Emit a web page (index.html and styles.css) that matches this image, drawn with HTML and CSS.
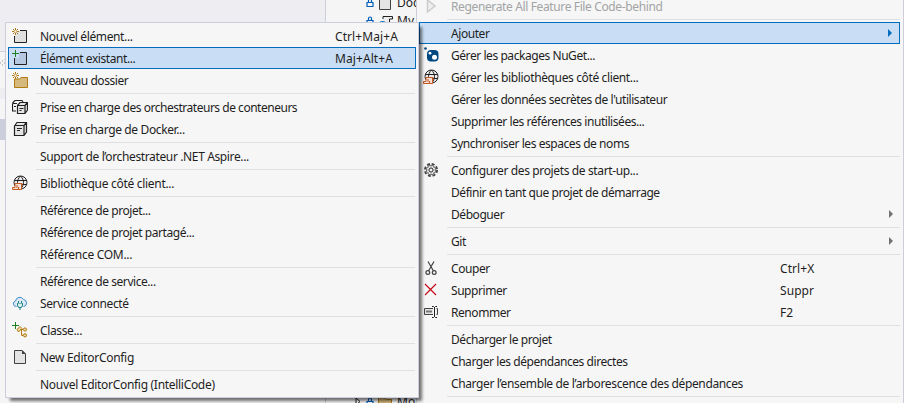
FILE: index.html
```
<!DOCTYPE html>
<html lang="fr">
<head>
<meta charset="utf-8">
<title>Menu contextuel</title>
<link rel="stylesheet" href="styles.css">
</head>
<body>
<svg width="0" height="0" class="defs">
  <symbol id="spark" viewBox="0 0 16 16"><path d="M3.5 0v2.4M3.5 4.6V7M0 3.5h2.4M4.6 3.5H7M1 1l1.6 1.6M4.4 4.4L6 6M6 1L4.4 2.6M2.6 4.4L1 6" stroke="#b27c13" fill="none"/></symbol>
  <symbol id="new" viewBox="0 0 16 16"><path d="M7 2.500H14.500V14.500H2.500V8" fill="#e0e0e0"/><path d="M8 2.500H14.500V14.500H2.500V8" stroke="#212121" fill="none"/><use href="#spark"/></symbol>
  <symbol id="existing" viewBox="0 0 16 16"><path d="M7 2.500H14.500V14.500H2.500V8H7z" fill="#b6c8e0"/><path d="M8 2.500H14.500V14.500H2.500V8" stroke="#212121" fill="none"/><path d="M3.500 0v7M0 3.500h7" stroke="#1f801f"/></symbol>
  <symbol id="folder" viewBox="0 0 16 16"><path d="M2.500 7V15.500H15.500V5.500H9L8 7z" fill="#d6b97c" stroke="#b27c13"/><use href="#spark"/></symbol>
  <symbol id="box" viewBox="0 0 16 16"><path d="M2.500 5L5 1.500H14.500V11L12 14.500H2.500zM2.500 4.500H12V14.500M12 4.500L14.500 1.500" fill="#e4e4e4" stroke="#212121" stroke-width="1.200"/><path d="M5 7.500h5M5 9.500h3" stroke="#212121"/></symbol>
  <symbol id="boxes" viewBox="0 0 16 16"><path d="M.5 4L3 1.500H10L11 3M.5 4.500V12H4M.5 4.500H5M2 7.500h2" fill="none" stroke="#212121" stroke-width="1.200"/><path d="M5.500 6.500L8 3.500H15.500V11L13 14.500H5.500zM5.500 6.500H13V14.500M13 6.500L15.500 3.500" fill="#e4e4e4" stroke="#212121" stroke-width="1.200"/><path d="M7.500 9.500h4M7.500 11.500h2" stroke="#212121"/></symbol>
  <symbol id="web" viewBox="0 0 16 16"><circle cx="8.500" cy="7.500" r="6.500" fill="#eee" stroke="#212121"/><path d="M2.500 5.500H14.500M2.500 9.500H14.500M8.500 1C4.500 5 4.500 10 8.500 14C12.500 10 12.500 5 8.500 1" fill="none" stroke="#212121"/><path d="M3 8.500H9.500V14.500H.5V12.500H3z" fill="#f2dfd5" stroke="#c75b20"/><path d="M5 10v3M6.500 12v3M8 8.500h2v2" fill="none" stroke="#c75b20"/></symbol>
  <symbol id="cloud" viewBox="0 0 16 16"><path d="M4.500 11.500H4A2.800 2.800 0 0 1 3.500 6A4.300 4.300 0 0 1 11.500 4.500A3.600 3.600 0 0 1 12 11.500H11.500" fill="#dce9f4" stroke="#3f8dcc"/><path d="M6.500 6v3M9.500 6v3M5 8.500h6M8 12.500V15" stroke="#178080"/><path d="M5.500 8.500v1.700a2.500 2.500 0 0 0 5 0V8.500" fill="#dceeee" stroke="#178080"/></symbol>
  <symbol id="class" viewBox="0 0 16 16"><path d="M5 7.500l3-3 2 2-3.500 3.500zM8.500 7.500H11M9.500 7.500V13.500H11" fill="#ead4a2" stroke="#b27c13"/><circle cx="13" cy="7.500" r="1.600" fill="#ead4a2" stroke="#b27c13"/><circle cx="13" cy="13.300" r="1.600" fill="#ead4a2" stroke="#b27c13"/><path d="M3.500 0v7M0 3.500h7" stroke="#1f801f"/></symbol>
  <symbol id="page" viewBox="0 0 16 16"><path d="M2.500 1.500H10L13.500 5V14.500H2.500z" fill="#e4e4e4" stroke="#424242"/><path d="M10 1V5H14z" fill="#424242"/></symbol>
  <symbol id="play" viewBox="0 0 16 16"><path d="M4.500 2V14L12 8z" fill="#eee" stroke="#ccc" stroke-width="1.500"/></symbol>
  <symbol id="nuget" viewBox="0 0 16 16"><circle cx="2.500" cy="1.500" r="1.300" fill="#004880"/><rect x="4" y="3" width="11.500" height="11.500" rx="4" fill="#004880"/><circle cx="7" cy="6.200" r="1.400" fill="#fff"/><circle cx="11.500" cy="10.300" r="2.500" fill="#fff"/></symbol>
  <symbol id="gear" viewBox="0 0 16 16"><circle cx="8" cy="8" r="6.100" fill="none" stroke="#424242" stroke-width="1.800" stroke-dasharray="2.900 1.890"/><circle cx="8" cy="8" r="4.700" fill="#e8e8e8" stroke="#555"/><path d="M8 3v10M3 8h10M4.500 4.500l7 7M11.500 4.500l-7 7" stroke="#999" stroke-width=".7"/><circle cx="8" cy="8" r="2" fill="#f6f6f6" stroke="#333"/></symbol>
  <symbol id="cut" viewBox="0 0 16 16"><path d="M5 1.500L10.500 11M11 1.500L5.500 11" stroke="#424242" stroke-width="1.200"/><circle cx="4.800" cy="12.500" r="1.900" fill="none" stroke="#424242" stroke-width="1.200"/><circle cx="11.200" cy="12.500" r="1.900" fill="none" stroke="#424242" stroke-width="1.200"/></symbol>
  <symbol id="delete" viewBox="0 0 16 16"><path d="M2 2L13 13M13 2L2 13" stroke="#c50b17" stroke-width="1.200"/></symbol>
  <symbol id="rename" viewBox="0 0 16 16"><path d="M10 4.500H1.500V10.500H10M13.500 4.500H14.500V10.500H13.500" fill="#e4e4e4" stroke="#424242"/><path d="M3 7.500h6" stroke="#777" stroke-width="2"/><path d="M9 2.500h1.500l1 1 1-1H14M9 13.500h1.500l1-1 1 1H14M11.500 3v10" fill="none" stroke="#212121"/></symbol>
  <symbol id="lock" viewBox="0 0 8 10"><path d="M2.500 4V2.500a1.500 1.500 0 0 1 3 0V4M1 4.500H7V8.500H1z" fill="none" stroke="#005dba" stroke-width="1.200"/></symbol>
</svg>

<div class="desk">
  <aside class="gutter"><div class="strip"></div><div class="band"><svg width="6" height="8" viewBox="0 0 6 8"><path d="M0 4h1M2 2h1M2 6h1M4 4h1M4 0h1" stroke="#999"/></svg></div><div class="selected"></div></aside>
  <section class="tree">
    <div class="node"><svg class="lock"><use href="#lock"/></svg><svg class="ico" viewBox="0 0 16 16"><path d="M2.500 1.500H13.500V14.500H2.500z" fill="#e4e4e4" stroke="#424242"/></svg><span>Doc</span></div>
    <div class="node"><svg class="lock"><use href="#lock"/></svg><svg class="ico" viewBox="0 0 16 16"><path d="M6 6V3.500H15.500V6H12.500V14H6" fill="#eee" stroke="#212121"/><circle cx="5.500" cy="12" r="4" fill="#1473c5"/></svg><span>My</span></div>
    <div class="node last"><svg class="twist" viewBox="0 0 6 10"><path d="M1 1V8L5 4.500z" fill="none" stroke="#212121"/></svg><svg class="lock"><use href="#lock"/></svg><svg class="ico" viewBox="0 0 16 16"><path d="M1.500 3.500H7L9 5.500H14.500V14H1.500z" fill="#d6b97c" stroke="#b27c13"/></svg><span>Mo</span></div>
  </section>
</div>

<nav class="menu main">
  <div class="item off"><svg class="ico"><use href="#play"/></svg><span class="label wide">Regenerate All Feature File Code-behind</span></div>
  <hr>
  <div class="item on"><span class="label">Ajouter</span><i class="arrow"></i></div>
  <div class="item"><svg class="ico"><use href="#nuget"/></svg><span class="label">Gérer les packages NuGet...</span></div>
  <div class="item"><svg class="ico"><use href="#web"/></svg><span class="label wide">Gérer les bibliothèques côté client...</span></div>
  <div class="item"><span class="label">Gérer les données secrètes de l'utilisateur</span></div>
  <div class="item"><span class="label">Supprimer les références inutilisées...</span></div>
  <div class="item"><span class="label">Synchroniser les espaces de noms</span></div>
  <hr>
  <div class="item"><svg class="ico"><use href="#gear"/></svg><span class="label wide">Configurer des projets de start-up...</span></div>
  <div class="item"><span class="label">Définir en tant que projet de démarrage</span></div>
  <div class="item"><span class="label">Déboguer</span><i class="arrow"></i></div>
  <hr>
  <div class="item"><span class="label">Git</span><i class="arrow"></i></div>
  <hr>
  <div class="item"><svg class="ico"><use href="#cut"/></svg><span class="label">Couper</span><kbd>Ctrl+X</kbd></div>
  <div class="item"><svg class="ico"><use href="#delete"/></svg><span class="label">Supprimer</span><kbd>Suppr</kbd></div>
  <div class="item"><svg class="ico"><use href="#rename"/></svg><span class="label">Renommer</span><kbd>F2</kbd></div>
  <hr>
  <div class="item"><span class="label">Décharger le projet</span></div>
  <div class="item"><span class="label">Charger les dépendances directes</span></div>
  <div class="item"><span class="label wide">Charger l’ensemble de l’arborescence des dépendances</span></div>
  <hr>
</nav>

<nav class="menu sub">
  <div class="item"><svg class="ico"><use href="#new"/></svg><span class="label wide">Nouvel élément...</span><kbd>Ctrl+Maj+A</kbd></div>
  <div class="item on"><svg class="ico"><use href="#existing"/></svg><span class="label">Élément existant...</span><kbd>Maj+Alt+A</kbd></div>
  <div class="item"><svg class="ico"><use href="#folder"/></svg><span class="label">Nouveau dossier</span></div>
  <hr>
  <div class="item"><svg class="ico"><use href="#boxes"/></svg><span class="label tight">Prise en charge des orchestrateurs de conteneurs</span></div>
  <div class="item"><svg class="ico"><use href="#box"/></svg><span class="label wide">Prise en charge de Docker...</span></div>
  <hr>
  <div class="item"><span class="label wide">Support de l’orchestrateur .NET Aspire...</span></div>
  <hr>
  <div class="item"><svg class="ico"><use href="#web"/></svg><span class="label wider">Bibliothèque côté client...</span></div>
  <hr>
  <div class="item"><span class="label">Référence de projet...</span></div>
  <div class="item"><span class="label">Référence de projet partagé...</span></div>
  <div class="item"><span class="label wider">Référence COM...</span></div>
  <hr>
  <div class="item"><span class="label">Référence de service...</span></div>
  <div class="item"><svg class="ico"><use href="#cloud"/></svg><span class="label wide">Service connecté</span></div>
  <hr>
  <div class="item"><svg class="ico"><use href="#class"/></svg><span class="label wide">Classe...</span></div>
  <hr>
  <div class="item"><svg class="ico"><use href="#page"/></svg><span class="label wider">New EditorConfig</span></div>
  <hr>
  <div class="item"><span class="label wider">Nouvel EditorConfig (IntelliCode)</span></div>
</nav>
</body>
</html>
```
FILE: styles.css
```
* { box-sizing: border-box; }
body {
  margin: 0;
  width: 904px;
  height: 403px;
  overflow: hidden;
  position: relative;
  background: #f5f5f5;
  color: #1e1e1e;
  font: 12px/22px "Noto Sans", "Open Sans", sans-serif;
  letter-spacing: -0.44px;
}
.defs { position: absolute; }
.desk { display: flex; height: 403px; }
.gutter { width: 325px; display: flex; flex-direction: column; }
.strip { height: 52px; background: #eeeef2; border-bottom: 1px solid #cccedb; }
.band { height: 47px; margin-bottom: 20px; padding-top: 7px; line-height: 0; background: linear-gradient(#f5f5f5 36px, #eeeef2 36px); }
.selected { width: 5px; height: 21px; background: #cccedb; }
.tree { width: 92px; height: 403px; overflow: hidden; border-left: 1px solid #cccedb; display: flex; flex-direction: column; padding-left: 29px; }
.node { display: flex; flex: none; align-items: center; height: 18px; width: 62px; white-space: nowrap; letter-spacing: 0; }
.node:first-child { margin-top: -6px; }
.node .lock { margin-left: 11px; margin-right: 3px; }
.node .ico { margin-right: 4px; }
.node.last { margin-top: 363px; }
.node.last .lock { margin-left: 5px; }
.twist { width: 6px; height: 10px; flex: none; }
.lock { width: 8px; height: 10px; flex: none; }
.ico { width: 16px; height: 16px; flex: none; }

.menu { position: absolute; background: #f6f6f6; border: 1px solid #cccedb; padding: 2px; }
.main { left: 416px; top: -8px; width: 488px; height: 420px; }
.sub { left: 5px; top: 22px; width: 414px; height: 376px; box-shadow: 4px 4px 3px -1px rgba(0, 0, 0, 0.55); }
.item {
  position: relative;
  display: flex;
  align-items: center;
  height: 22px;
  padding-left: 31px;
  border: 1px solid transparent;
  white-space: nowrap;
}
.item .ico { margin-left: -28px; margin-right: 12px; }
.item.on { background: #c9def5; border-color: #006cbe; margin-right: 1px; }
.sub .item.on { margin-right: 0; }
.label { padding-top: 2px; }
.tight { letter-spacing: -0.48px; }
.wide { letter-spacing: -0.37px; }
.wider { letter-spacing: -0.3px; }
.off { color: #a2a4a5; }
kbd { position: absolute; font: inherit; letter-spacing: 0.08px; left: 360px; top: 0; }
.sub kbd { left: 326px; }
hr { height: 1px; border: 0; margin: 2px 1px 2px 28px; background: #dfe0e3; }
.arrow {
  margin-left: auto;
  margin-right: 7px;
  border: solid transparent;
  border-width: 4px 0 4px 4px;
  border-left-color: #717171;
}
.item.on .arrow { border-left-color: #006cbe; }
```
